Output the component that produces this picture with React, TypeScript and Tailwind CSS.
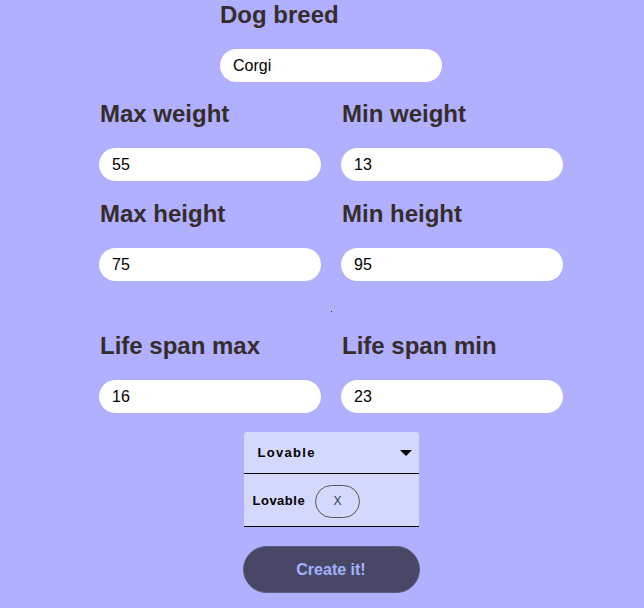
import React from "react";

function Field({ label, value }: { label: string; value: string }) {
  return (
    <div className="flex flex-col">
      <h2 className="h-[28px] pl-[1px] text-[24px] font-bold leading-[28px] text-[#362c2c]">{label}</h2>
      <input
        readOnly
        value={value}
        className="mt-[20px] h-[33px] w-[222px] rounded-full bg-white px-[13px] text-[16px] text-black outline-none"
      />
    </div>
  );
}

export default function App() {
  return (
    <div className="min-h-[608px] w-full bg-[#b0b0fe] pl-[18px] font-['Liberation_Sans',Arial,sans-serif]">
      <div className="flex flex-col items-center">
        <div className="mt-[1px] flex w-[222px] flex-col">
          <h1 className="h-[28px] text-[24px] font-bold leading-[28px] text-[#362c2c]">Dog breed</h1>
          <input
            readOnly
            value="Corgi"
            className="mt-[20px] h-[33px] w-[222px] rounded-full bg-white px-[13px] text-[16px] text-black outline-none"
          />
        </div>

        <div className="mt-[18px] grid grid-cols-[222px_222px] gap-x-[20px]">
          <Field label="Max weight" value="55" />
          <Field label="Min weight" value="13" />
          <div className="col-span-2 mt-[19px] grid grid-cols-[222px_222px] gap-x-[20px]">
            <Field label="Max height" value="75" />
            <Field label="Min height" value="95" />
          </div>
          <div className="col-span-2 flex h-[51px] justify-center pt-[30px]">
            <div className="h-[1px] w-[1px] bg-[#333]" />
          </div>
          <Field label="Life span max" value="16" />
          <Field label="Life span min" value="23" />
        </div>

        <div className="mt-[19px] w-[175px] rounded-t-[3px] bg-[#d4d8fd]">
          <div className="flex h-[42px] items-center justify-between border-b border-black pl-[14px] pr-[7px]">
            <span className="text-[13px] font-bold tracking-[1.3px] text-black">Lovable</span>
            <svg width="12" height="6" viewBox="0 0 12 6">
              <path d="M0 0 L12 0 L6 6 Z" fill="#000" />
            </svg>
          </div>
          <div className="flex h-[53px] items-center border-b border-black pl-[9px] pt-[2px]">
            <span className="text-[13px] font-bold tracking-[0.5px] text-black">Lovable</span>
            <div className="ml-[10px] flex h-[33px] w-[45px] items-center justify-center rounded-full border border-[#555]">
              <span className="text-[12px] text-[#2f3b5c]">X</span>
            </div>
          </div>
        </div>

        <button className="mt-[19px] h-[47px] w-[177px] rounded-full border border-[#5a5a7c] bg-[#484866] text-[16px] font-bold text-[#a3b2ff]">
          Create it!
        </button>
      </div>
    </div>
  );
}
